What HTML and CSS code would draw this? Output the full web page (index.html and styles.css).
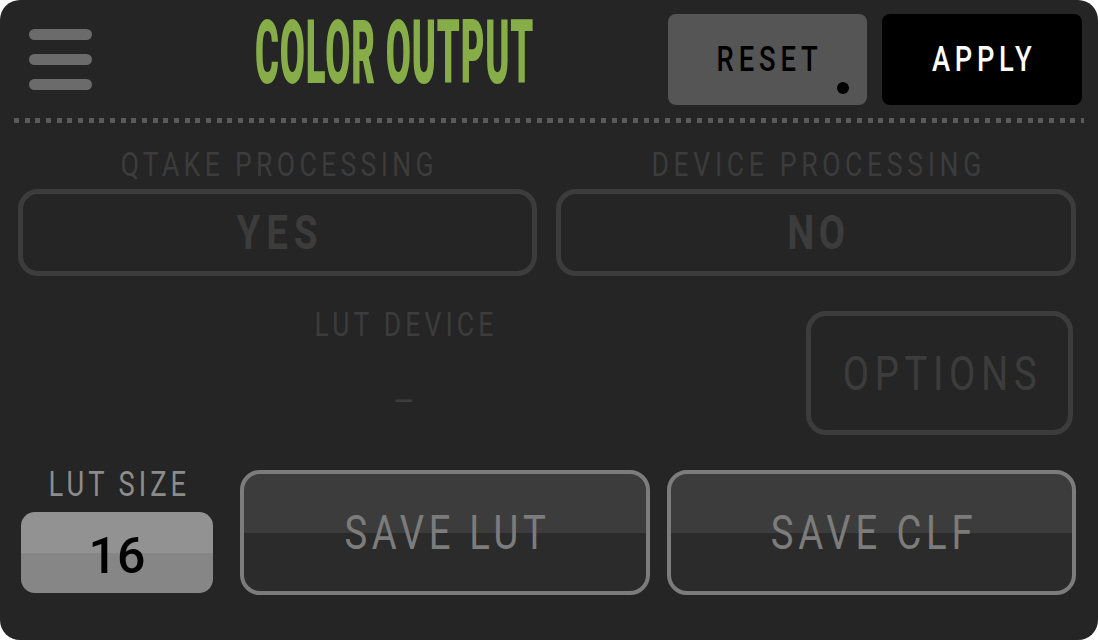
FILE: index.html
```html
<!DOCTYPE html>
<html>
<head>
<meta charset="utf-8">
<link rel="stylesheet" href="styles.css">
</head>
<body>
<div class="panel">
  <header class="header">
    <div class="menu"><span></span><span></span><span></span></div>
    <div class="title"><span class="title-text">COLOR OUTPUT</span></div>
    <div class="actions">
      <div class="btn btn-reset"><span class="t">RESET</span><i class="dot"></i></div>
      <div class="btn btn-apply"><span class="t">APPLY</span></div>
    </div>
  </header>
  <div class="divider"></div>
  <section class="proc">
    <div class="proc-col">
      <div class="label label-q"><span class="t">QTAKE PROCESSING</span></div>
      <div class="toggle toggle-yes"><span class="t">YES</span></div>
    </div>
    <div class="proc-col">
      <div class="label label-d"><span class="t">DEVICE PROCESSING</span></div>
      <div class="toggle toggle-no"><span class="t">NO</span></div>
    </div>
  </section>
  <section class="device">
    <div class="device-col">
      <div class="label label-device"><span class="t">LUT DEVICE</span></div>
      <div class="dash">–</div>
    </div>
    <div class="options"><span class="t">OPTIONS</span></div>
  </section>
  <section class="bottom">
    <div class="size-col">
      <div class="label label-size"><span class="t">LUT SIZE</span></div>
      <div class="size-box">16</div>
    </div>
    <div class="save save-lut"><span class="t">SAVE LUT</span></div>
    <div class="save save-clf"><span class="t">SAVE CLF</span></div>
  </section>
</div>
</body>
</html>
```
FILE: styles.css
```css
html, body {
  margin: 0;
  padding: 0;
  background: #ffffff;
}
body {
  font-family: Roboto, "Liberation Sans", sans-serif;
}
.panel {
  width: 1098px;
  height: 640px;
  box-sizing: border-box;
  background: #252525;
  border-radius: 20px;
  display: flex;
  flex-direction: column;
  overflow: hidden;
}
.t {
  display: inline-block;
  white-space: nowrap;
  letter-spacing: var(--ls, 5px);
  padding-left: var(--ls, 5px);
  transform: scaleX(0.78);
}
.header {
  display: flex;
  align-items: center;
  height: 91px;
  margin-top: 14px;
  padding: 0 16px 0 29px;
}
.menu {
  width: 63px;
  display: flex;
  flex-direction: column;
  gap: 14px;
  flex: none;
}
.menu span {
  display: block;
  height: 11px;
  border-radius: 6px;
  background: #6b6b6b;
}
.title {
  flex: none;
  width: 278px;
  margin-left: 163px;
  align-self: flex-start;
  margin-top: -6px;
  white-space: nowrap;
}
.title-text {
  display: inline-block;
  font-family: Roboto, sans-serif;
  font-weight: 900;
  font-size: 89px;
  line-height: 1;
  letter-spacing: 2px;
  color: #86ad47;
  transform: scaleX(0.41);
  transform-origin: left center;
}
.actions {
  margin-left: auto;
  display: flex;
  gap: 15px;
}
.btn {
  position: relative;
  height: 91px;
  display: flex;
  align-items: center;
  justify-content: center;
  border-radius: 8px;
  font-size: 35px;
  font-weight: 500;
  line-height: 1;
  --ls: 6.3px;
}
.btn-reset {
  width: 199px;
  background: #555555;
  color: #000000;
}
.btn-apply {
  width: 200px;
  background: #000000;
  color: #ffffff;
  --ls: 6px;
}
.dot {
  position: absolute;
  left: 169px;
  top: 68px;
  width: 12px;
  height: 12px;
  border-radius: 50%;
  background: #000;
}
.divider {
  margin: 13px 14px 0 14px;
  height: 5px;
  background-image: repeating-linear-gradient(to right, #5a5a5a 0 5px, transparent 5px 10.67px);
}
.label {
  font-size: 34px;
  line-height: 34px;
  text-align: center;
  color: #3c3c3c;
  white-space: nowrap;
  --ls: 5.6px;
}
.label-d {
  --ls: 6px;
}
.proc {
  margin-top: 24px;
  padding-left: 18px;
  display: grid;
  grid-template-columns: 519px 520px;
  column-gap: 19px;
}
.toggle {
  margin-top: 8px;
  height: 87px;
  box-sizing: border-box;
  border: 5px solid #3c3c3c;
  border-radius: 20px;
  display: flex;
  align-items: center;
  justify-content: center;
  font-size: 49px;
  font-weight: 700;
  color: #3c3c3c;
  line-height: 1;
  --ls: 8px;
}
.toggle-no {
  --ls: 6px;
}
.device {
  margin-top: 35px;
  padding-left: 18px;
  display: grid;
  grid-template-columns: 772px 267px;
  column-gap: 16px;
  align-items: start;
}
.label-device {
  margin-top: -4px;
  --ls: 5.3px;
}
.dash {
  margin-top: 43px;
  font-size: 34px;
  line-height: 34px;
  text-align: center;
  color: #3c3c3c;
}
.options {
  height: 124px;
  box-sizing: border-box;
  border: 5px solid #3c3c3c;
  border-radius: 20px;
  display: flex;
  align-items: center;
  justify-content: center;
  font-size: 49px;
  line-height: 1;
  color: #3c3c3c;
  --ls: 7.3px;
}
.bottom {
  margin-top: 35px;
  padding-left: 21px;
  display: flex;
  align-items: flex-start;
}
.size-col {
  width: 192px;
  flex: none;
}
.label-size {
  margin-top: -2px;
  font-size: 35px;
  color: #8c8c8c;
  --ls: 5.1px;
}
.size-box {
  margin-top: 10px;
  height: 81px;
  border-radius: 14px;
  background: linear-gradient(to bottom, #929292 0 41px, #868686 41px 100%);
  display: flex;
  align-items: center;
  justify-content: center;
  padding-top: 7px;
  box-sizing: border-box;
  font-size: 50px;
  font-weight: 500;
  letter-spacing: 0;
  line-height: 1;
  color: #000;
}
.save {
  flex: none;
  height: 125px;
  box-sizing: border-box;
  border: 4px solid #7c7c7c;
  border-radius: 20px;
  background: linear-gradient(to bottom, #3c3c3c 0 59px, #2b2b2b 59px 100%);
  display: flex;
  align-items: center;
  justify-content: center;
  font-size: 49px;
  line-height: 1;
  color: #7c7c7c;
  --ls: 6px;
}
.save-lut {
  width: 410px;
  margin-left: 27px;
}
.save-clf {
  width: 409px;
  margin-left: 17px;
  --ls: 6.2px;
}
```
